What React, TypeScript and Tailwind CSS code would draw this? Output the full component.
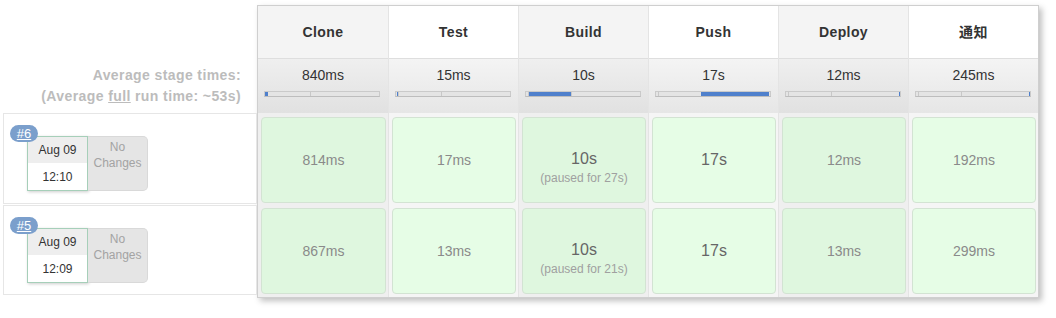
import React from "react";

type Stage = {
  name: string;
  avg: string;
  barLeft: number;
  barWidth: number;
  cells: { value: string; big?: boolean; paused?: string }[];
};

const stages: Stage[] = [
  { name: "Clone", avg: "840ms", barLeft: 0, barWidth: 3, cells: [{ value: "814ms" }, { value: "867ms" }] },
  { name: "Test", avg: "15ms", barLeft: 1, barWidth: 1, cells: [{ value: "17ms" }, { value: "13ms" }] },
  {
    name: "Build",
    avg: "10s",
    barLeft: 3,
    barWidth: 42,
    cells: [
      { value: "10s", big: true, paused: "(paused for 27s)" },
      { value: "10s", big: true, paused: "(paused for 21s)" },
    ],
  },
  { name: "Push", avg: "17s", barLeft: 45, barWidth: 68, cells: [{ value: "17s", big: true }, { value: "17s", big: true }] },
  { name: "Deploy", avg: "12ms", barLeft: 113, barWidth: 1, cells: [{ value: "12ms" }, { value: "13ms" }] },
  { name: "通知", avg: "245ms", barLeft: 113, barWidth: 1, cells: [{ value: "192ms" }, { value: "299ms" }] },
];

const builds = [
  { id: "#6", date: "Aug 09", time: "12:10" },
  { id: "#5", date: "Aug 09", time: "12:09" },
];

function BuildRow({ b, first }: { b: (typeof builds)[number]; first: boolean }) {
  return (
    <div
      className={`relative border border-[#e6e6e6] bg-white ${first ? "h-[91px]" : "h-[90px] mt-[1px]"}`}
    >
      <span className="absolute left-[6px] top-[11px] z-10 flex h-[17px] w-[28px] items-center justify-center rounded-full bg-[#7b9fcc] text-[13px] text-white underline">
        {b.id}
      </span>
      <div className="flex pl-[23px] pt-[22px]">
        <div className="flex h-[55px] w-[61px] flex-col border border-[#a6cfb9] shadow-[1px_1px_3px_rgba(0,0,0,0.2)]">
          <div className="flex h-[26px] items-center justify-center bg-[#eeeeee] text-[12px] text-[#333]">
            {b.date}
          </div>
          <div className="flex flex-1 items-center justify-center bg-white text-[12px] text-[#333]">
            {b.time}
          </div>
        </div>
        <div className="flex h-[55px] w-[60px] flex-col items-center rounded-r-[5px] border border-l-0 border-[#d9d9d9] bg-[#e5e5e5] pt-[2px] text-[12px] leading-[16px] text-[#a3a3a3]">
          <span>No</span>
          <span>Changes</span>
        </div>
      </div>
    </div>
  );
}

function Column({ s, idx }: { s: Stage; idx: number }) {
  const odd = idx % 2 === 0;
  return (
    <div className={`flex w-[130px] flex-col ${idx > 0 ? "border-l border-[#e4e4e4]" : ""}`}>
      <div
        className={`flex h-[52px] items-center justify-center text-[14px] font-bold tracking-[0.4px] text-[#333] ${
          odd ? "bg-[#f4f4f4]" : "bg-white"
        }`}
      >
        {s.name}
      </div>
      <div
        className={`h-[55px] border-t border-[#dedede] bg-linear-to-b ${
          odd ? "from-[#efefef] to-[#e1e1e1]" : "from-[#f4f4f4] to-[#e6e6e6]"
        }`}
      >
        <div className="pt-[7px] text-center text-[14px] leading-[18px] text-[#333]">{s.avg}</div>
        <div className="relative ml-[6px] mt-[7px] h-[6px] w-[116px] border border-[#cacaca] border-b-[#bdbdbd] bg-[#e4e4e4]">
          <div className="absolute left-[45px] top-0 h-full w-[1px] bg-[#c8c8c8]" />
          <div className="absolute left-[2px] top-0 h-full w-[1px] bg-[#c8c8c8]" />
          <div className="absolute top-0 h-full bg-[#4f80cc]" style={{ left: s.barLeft, width: s.barWidth }} />
        </div>
      </div>
      <div
        className={`flex flex-col gap-[5px] pb-[3px] pl-[3px] pr-[2px] pt-[4px] ${
          odd ? "bg-[#efefef]" : "bg-[#f5f5f5]"
        }`}
      >
        {s.cells.map((c, i) => (
          <div
            key={i}
            className={`flex h-[86px] flex-col items-center justify-center rounded-[4px] border border-[#d3e3d3] ${
              odd ? "bg-[#dff7df]" : "bg-[#e6fde6]"
            } ${c.paused ? "pt-[14px]" : ""}`}
          >
            <span
              className={
                c.big ? "text-[16px] leading-[20px] text-[#666]" : "text-[14px] leading-[18px] text-[#8a8a8a]"
              }
            >
              {c.value}
            </span>
            {c.paused && <span className="mt-[1px] text-[12px] leading-[16px] text-[#a0a0a0]">{c.paused}</span>}
          </div>
        ))}
      </div>
    </div>
  );
}

export default function App() {
  return (
    <div
      className="flex h-[318px] w-[1056px] bg-white"
      style={{ fontFamily: '"Liberation Sans", Arial, "Noto Sans CJK JP", sans-serif' }}
    >
      <div className="flex w-[257px] flex-col pl-[3px]">
        <div className="h-[113px] pr-[16px] pt-[65px] text-right text-[14px] font-bold leading-[21px] tracking-[0.4px] text-[#bcbcbc]">
          <div>Average stage times:</div>
          <div>
            (Average <span className="underline">full</span> run time: ~53s)
          </div>
        </div>
        {builds.map((b, i) => (
          <BuildRow key={b.id} b={b} first={i === 0} />
        ))}
      </div>
      <div className="mt-[5px] flex self-start border border-[#cfcfcf] shadow-[3px_3px_6px_rgba(0,0,0,0.25)]">
        {stages.map((s, i) => (
          <Column key={s.name} s={s} idx={i} />
        ))}
      </div>
    </div>
  );
}
